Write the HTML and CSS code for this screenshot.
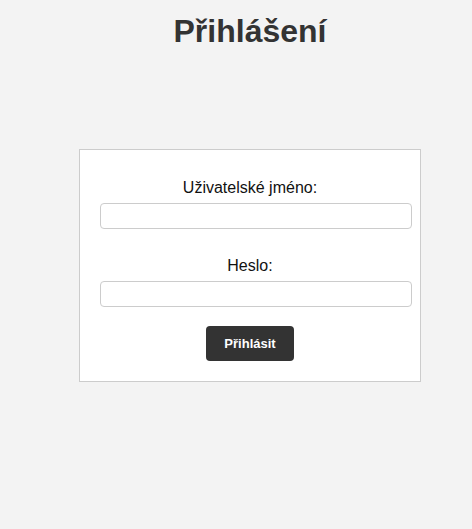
FILE: index.html
```html
<!DOCTYPE html>
<html lang="cs">
<head>
<meta charset="utf-8">
<title>Přihlášení</title>
<link rel="stylesheet" href="styles.css">
</head>
<body>
<main class="page">
  <h1 class="title">Přihlášení</h1>
  <form class="login-box">
    <div class="field">
      <label class="field-label" for="username">Uživatelské jméno:</label>
      <input class="field-input" type="text" id="username" name="username">
    </div>
    <div class="field">
      <label class="field-label" for="password">Heslo:</label>
      <input class="field-input" type="password" id="password" name="password">
    </div>
    <button class="submit" type="submit">Přihlásit</button>
  </form>
</main>
</body>
</html>
```

FILE: styles.css
```css
html, body {
  margin: 0;
  padding: 0;
  background: #f3f3f3;
  font-family: "Liberation Sans", Arial, sans-serif;
  color: #111;
}

.page {
  display: flex;
  flex-direction: column;
  align-items: center;
  padding-left: 28px;
  min-height: 529px;
  box-sizing: border-box;
}

.title {
  margin: 13px 0 0;
  font-size: 32px;
  line-height: 37px;
  font-weight: bold;
  color: #333;
}

.login-box {
  margin-top: 99px;
  width: 300px;
  padding: 20px;
  background: #fff;
  border: 1px solid #ccc;
  display: flex;
  flex-direction: column;
  align-items: center;
}

.field {
  width: 300px;
  margin-bottom: 19px;
  text-align: center;
}

.field-label {
  display: block;
  margin: 9px 0 6px;
  font-size: 16px;
  line-height: 18px;
  color: #111;
}

.field-input {
  display: block;
  width: 100%;
  height: 14px;
  padding: 5px;
  margin: 0;
  border: 1px solid #ccc;
  border-radius: 4px;
  background: #fff;
  font-family: inherit;
  font-size: 13px;
}

.submit {
  width: 88px;
  height: 35px;
  border: none;
  border-radius: 4px;
  background: #333;
  color: #fff;
  font-family: "Liberation Sans", Arial, sans-serif;
  font-size: 13px;
  font-weight: bold;
  padding: 0;
}
```
